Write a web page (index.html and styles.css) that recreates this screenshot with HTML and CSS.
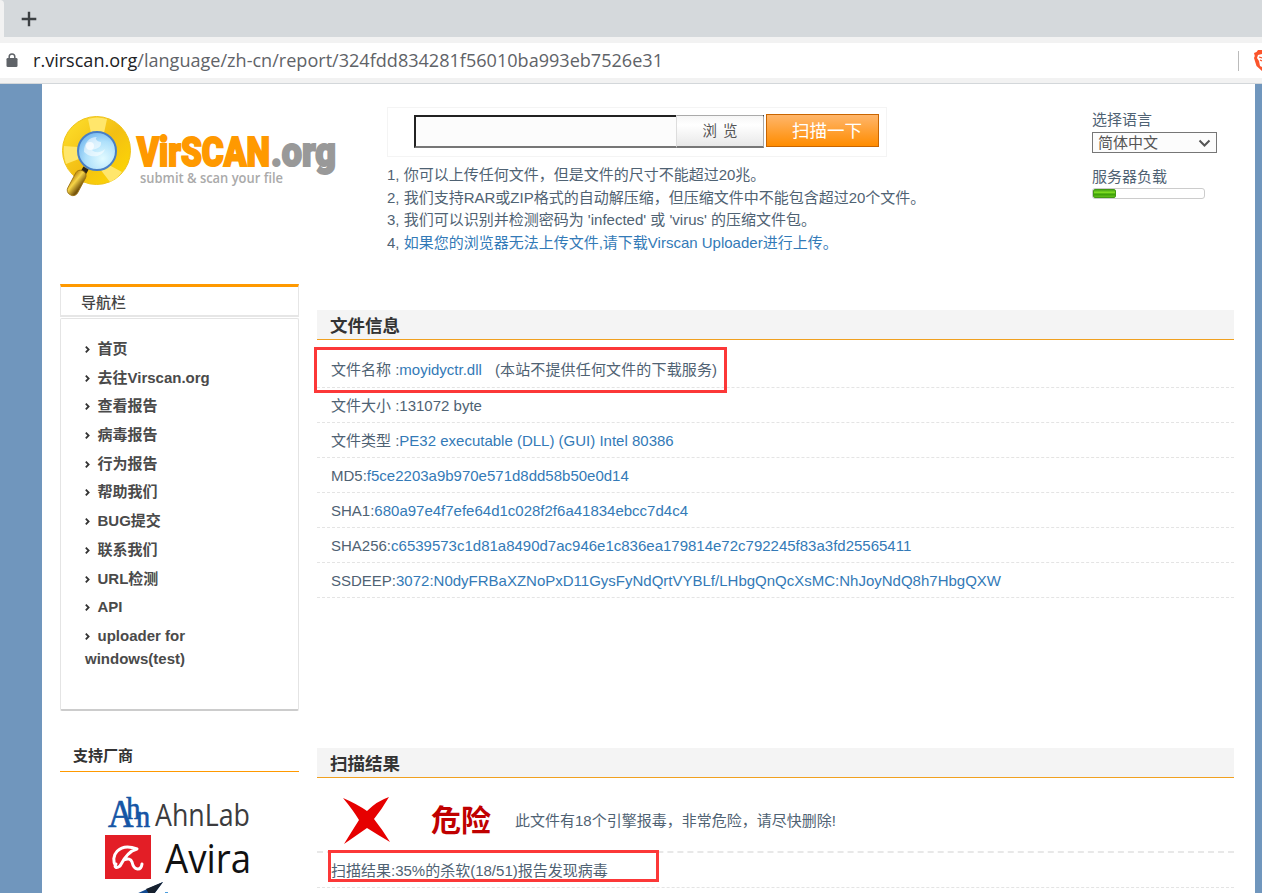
FILE: index.html
```html
<!DOCTYPE html>
<html lang="zh-CN">
<head>
<meta charset="utf-8">
<title>VirSCAN.org</title>
<link rel="stylesheet" href="styles.css">
</head>
<body>
<svg width="0" height="0" class="defs"><symbol id="chev" viewBox="0 0 5 7"><path d="M.8.7 3.600 3.500.8 6.300" fill="none" stroke="#333" stroke-width="1.800"/></symbol></svg>
<div class="tabstrip"><div class="tab-edge"></div><svg class="plus" width="16" height="16" viewBox="0 0 16 16"><path d="M8 .7v14.600M.7 8h14.600" stroke="#3c4043" stroke-width="2.400"/></svg></div>
<div class="toolbar">
  <div class="address">
    <svg class="lock" width="12" height="15" viewBox="0 0 12 15"><rect x=".5" y="5" width="11" height="9" rx="1.3" fill="#5f6368"/><path d="M3.2 6V3.8a2.8 2.8 0 0 1 5.6 0V6" fill="none" stroke="#5f6368" stroke-width="1.5"/></svg>
    <svg class="url" width="640" height="34"><text x="0" y="23" textLength="630" lengthAdjust="spacingAndGlyphs"><tspan fill="#202124">r.virscan.org</tspan><tspan fill="#5f6368">/language/zh-cn/report/324fdd834281f56010ba993eb7526e31</tspan></text></svg>
    <div class="divider"></div>
    <svg class="shield" width="9" height="24" viewBox="0 0 9 24"><path d="M9 1H5L3.500 3 1 4l.8 3L1 9l2.500 8L9 22z" fill="#fb542b"/><path d="M9 5 5 6 4 9l2 3 1 5 2 1z" fill="#fff"/><path d="M6 8l3 1M7 11l2 1" stroke="#fb542b" stroke-width="1.3"/></svg>
  </div>
</div>
<div class="page">
  <div class="sheet">
    <header class="header">
      <svg class="logo" width="290" height="94" viewBox="0 0 290 94">
        <defs>
          <linearGradient id="ring" x2="1" y2="1"><stop offset="0" stop-color="#ffe32e"/><stop offset=".5" stop-color="#f3bf14"/><stop offset="1" stop-color="#ffdb00"/></linearGradient>
          <radialGradient id="lens" cx=".65" cy=".7" r=".75"><stop offset="0" stop-color="#e2fbff"/><stop offset=".6" stop-color="#aee0fb"/><stop offset="1" stop-color="#75b8ee"/></radialGradient>
          <linearGradient id="grip" x2="1" y2=".5"><stop offset="0" stop-color="#b57d0c"/><stop offset=".45" stop-color="#f7d548"/><stop offset="1" stop-color="#76540c"/></linearGradient>
        </defs>
        <circle cx="40.500" cy="43.500" r="34" fill="url(#ring)" stroke="#efc319" stroke-width="1"/>
        <path d="M32 12q9-3 19 0l-3 14H35zM8 39l14 1 1 12-13 5q-3-9-2-18zM53 58l13 7q-5 7-12 10l-10-13z" fill="#ffe66b"/>
        <path d="m30 61-5 9" stroke="#2a2418" stroke-width="6"/>
        <circle cx="41" cy="44" r="19" fill="url(#lens)" stroke="#4a7fc4" stroke-width="2"/>
        <path d="M28 45c0-9 5-15 13-15-3 2 1 5 4 5 1 5-4 7-9 8 4 4 10 2 13-1-2 7-11 9-17 6z" fill="#fff" opacity=".55"/>
        <circle cx="34" cy="39" r="4" fill="#fff" opacity=".7"/>
        <rect x="-5.500" y="0" width="11" height="27" rx="5" transform="translate(27 64) rotate(28)" fill="url(#grip)" stroke="#9a7110" stroke-width=".8"/>
        <text class="brand brand-main" x="81" y="59" textLength="133" lengthAdjust="spacingAndGlyphs">VirSCAN</text>
        <text class="brand brand-org" x="215" y="59" textLength="65" lengthAdjust="spacingAndGlyphs">.org</text>
        <text class="brand-sub" x="84" y="76" textLength="143" lengthAdjust="spacingAndGlyphs">submit &amp; scan your file</text>
      </svg>
      <div class="upload">
        <div class="upload-box">
          <div class="file"><div class="browse">浏 览</div></div>
          <div class="scan">扫描一下</div>
        </div>
        <ol class="tips">
          <li>1, 你可以上传任何文件，但是文件的尺寸不能超过20兆。</li>
          <li>2, 我们支持RAR或ZIP格式的自动解压缩，但压缩文件中不能包含超过20个文件。</li>
          <li>3, 我们可以识别并检测密码为 'infected' 或 'virus' 的压缩文件包。</li>
          <li>4, <a>如果您的浏览器无法上传文件,请下载Virscan Uploader进行上传。</a></li>
        </ol>
      </div>
      <div class="tools">
        <div class="label">选择语言</div>
        <div class="select">简体中文<svg width="13" height="8" viewBox="0 0 13 8"><path d="m1.500 1.500 5 5 5-5" fill="none" stroke="#555" stroke-width="2"/></svg></div>
        <div class="label load">服务器负载</div>
        <div class="meter"><div class="meter-fill"></div></div>
      </div>
    </header>
    <div class="columns">
      <aside class="side">
        <div class="nav-title">导航栏</div>
        <ul class="nav">
          <li><svg><use href="#chev"/></svg>首页</li>
          <li><svg><use href="#chev"/></svg>去往Virscan.org</li>
          <li><svg><use href="#chev"/></svg>查看报告</li>
          <li><svg><use href="#chev"/></svg>病毒报告</li>
          <li><svg><use href="#chev"/></svg>行为报告</li>
          <li><svg><use href="#chev"/></svg>帮助我们</li>
          <li><svg><use href="#chev"/></svg>BUG提交</li>
          <li><svg><use href="#chev"/></svg>联系我们</li>
          <li><svg><use href="#chev"/></svg>URL检测</li>
          <li><svg><use href="#chev"/></svg>API</li>
          <li><svg><use href="#chev"/></svg>uploader for<br>windows(test)</li>
        </ul>
        <div class="vendors-title">支持厂商</div>
        <svg class="vendors" width="160" height="101" viewBox="0 0 160 101">
          <text class="ahn-mark" x="8" y="33.500" textLength="42" lengthAdjust="spacingAndGlyphs"><tspan font-size="39">A</tspan><tspan font-size="31" dx="-8" dy="-8">h</tspan><tspan font-size="31" dx="-5" dy="8">n</tspan></text>
          <text class="vendor-name" x="55" y="33" textLength="95" lengthAdjust="spacingAndGlyphs" font-size="31" fill="#3c3c3e">AhnLab</text>
          <rect x="5" y="42" width="46" height="44" fill="#e31e26"/>
          <path d="M16 74C9 63 19 49 37 56 29 58 24 65 20 73 16 76 14 74 16 71M24 67C28 65 31 66 32 69 34 78 41 78 42 71" fill="none" stroke="#fff" stroke-width="3" stroke-linecap="round" stroke-linejoin="round"/>
          <text class="vendor-name" x="65" y="79.500" textLength="86" lengthAdjust="spacingAndGlyphs" font-size="41" fill="#111">Avira</text>
          <path d="M36 101 63 89l-9 12z" fill="#124b92"/><path d="m46 96 17-7-9 12h-5z" fill="#16202e"/><path d="M65 101v-2h3v2z" fill="#4c9ddd"/>
        </svg>
      </aside>
      <main class="main">
        <h2>文件信息</h2>
        <div class="rows">
          <div class="row first">文件名称 :<a>moyidyctr.dll</a><span class="note">(本站不提供任何文件的下载服务)</span><div class="mark mark-name"></div></div>
          <div class="row">文件大小 :131072 byte</div>
          <div class="row">文件类型 :<a>PE32 executable (DLL) (GUI) Intel 80386</a></div>
          <div class="row">MD5:<a>f5ce2203a9b970e571d8dd58b50e0d14</a></div>
          <div class="row">SHA1:<a>680a97e4f7efe64d1c028f2f6a41834ebcc7d4c4</a></div>
          <div class="row">SHA256:<a>c6539573c1d81a8490d7ac946e1c836ea179814e72c792245f83a3fd25565411</a></div>
          <div class="row">SSDEEP:<a>3072:N0dyFRBaXZNoPxD11GysFyNdQrtVYBLf/LHbgQnQcXsMC:NhJoyNdQ8h7HbgQXW</a></div>
        </div>
        <h2>扫描结果</h2>
        <div class="verdict">
          <svg width="48" height="46" viewBox="0 0 48 46"><path d="M0 1Q14 7 24 14 34 4 46 0 39 12 31 22 39 32 47 45 35 38 24 31 14 38 1 47 9 34 16 23 10 13 0 1z" fill="#e60000"/></svg>
          <strong>危险</strong>
          <span>此文件有18个引擎报毒，非常危险，请尽快删除!</span>
        </div>
        <div class="row">扫描结果:35%的杀软(18/51)报告发现病毒<div class="mark mark-summary"></div></div>
      </main>
    </div>
  </div>
</div>
</body>
</html>
```
FILE: styles.css
```css
* { box-sizing: border-box; }
body { margin: 0; width: 1262px; height: 893px; overflow: hidden; background: #fff; color: #4f6273; font: 15px/23px "Liberation Sans", Arial, "Noto Sans CJK SC", sans-serif; }
a { color: #337ab7; }
svg { display: block; flex: none; overflow: visible; }
.defs { position: absolute; }
.tabstrip { height: 37px; display: flex; background: #d5d9dc; }
.tab-edge { width: 4px; background: #f2f2f2; border-top-right-radius: 4px; }
.plus { margin: 11px 0 0 17px; }
.toolbar { height: 47px; padding: 6px 0 5px; background: #f2f2f2; border-bottom: 1px solid #d3d7da; }
.address { height: 35px; display: flex; align-items: center; background: #fff; }
.lock { margin-left: 6px; }
.url { margin-left: 15px; font: 18.500px "Open Sans", "Noto Sans", sans-serif; }
.divider { width: 1px; height: 20px; margin-left: 565px; background: #bbb; }
.shield { margin-left: 14px; }
.page { height: 809px; padding: 0 7px 0 42px; background: #7096bd; }
.sheet { height: 809px; background: #fff; overflow: hidden; }
.header { height: 200px; display: flex; padding-top: 23px; }
.logo { margin: 0 0 0 14px; }
.brand { font: 900 41px Roboto, "Open Sans", sans-serif; stroke-width: 2px; }
.brand-main { fill: #f90; stroke: #f90; }
.brand-org { fill: #999; stroke: #999; }
.brand-sub { font: 600 15px "Open Sans", sans-serif; fill: #aaa; }
.upload { width: 560px; margin-left: 41px; }
.upload-box { width: 500px; height: 50px; display: flex; padding: 6px 0 0 26px; border: 1px solid #f4f4f4; }
.file { width: 350px; height: 33px; margin-top: 1px; display: flex; justify-content: flex-end; background: #fcfcfc; border: 2px solid #222; border-right: 1px solid #aaa; border-bottom-color: #767676; }
.browse { width: 87px; height: 33px; margin-top: -2px; border-top: 1px solid #aaa; border-bottom: 2px solid #777; border-left: 1px solid #ddd; background: linear-gradient(#f6f6f6, #fff 30%, #e8e8e8); text-align: center; line-height: 31px; font-size: 14.500px; word-spacing: 2px; color: #555; }
.scan { width: 113px; height: 33px; margin-left: 2px; padding-left: 9px; border: 1px solid #c96500; background: linear-gradient(#ffb66b, #ff8c00); color: #fff; text-align: center; font-size: 17.500px; line-height: 32px; }
.tips { list-style: none; margin: 7px 0 0; padding: 0; line-height: 22.7px; white-space: nowrap; }
.tools { width: 125px; margin-left: 145px; }
.label { height: 24px; line-height: 23px; margin-top: 1px; }
.select { height: 21px; display: flex; align-items: center; justify-content: space-between; padding: 0 5px; border: 1px solid #767676; background: #fcfcfc; color: #555; line-height: 19px; }
.load { margin-top: 12px; height: 23px; }
.meter { width: 113px; height: 11px; border: 1px solid #ccc; border-radius: 3px; background: #fff; }
.meter-fill { width: 23px; height: 9px; border-radius: 2px; background: linear-gradient(#4aa51a, #7fdd22 35%, #3b9e08 60%, #62bf19); border: 1px solid #429914; }
.columns { display: flex; gap: 18px; padding-left: 18px; }
.side { width: 239px; height: 609px; }
.nav-title { height: 33px; padding-left: 20px; border: 2px solid #e6e6e6; border-width: 3px 1px 2px; border-top-color: #f90; line-height: 32px; font-weight: 500; color: #444; }
.nav { list-style: none; margin: 1px 0 0; padding: 18px 24px 0; height: 393px; border: 1px solid #e4e4e4; border-bottom: 2px solid #ccc; border-radius: 2px; color: #4a4a4a; font-weight: 700; line-height: 23px; }
.nav li { margin-bottom: 5.700px; }
.nav svg { display: inline-block; width: 5px; height: 7px; margin: 0 7.500px 0 0; vertical-align: 1px; }
.vendors-title { height: 33px; margin-top: 28px; padding-left: 13px; border-bottom: 1px solid #f90; color: #333; font-weight: 700; line-height: 33px; }
.vendors { margin: 21px 0 0 40px; overflow: hidden; }
.ahn-mark { font-family: "Liberation Serif", serif; fill: #1555a5; stroke: #1555a5; stroke-width: .7px; }
.vendor-name { font-family: "Open Sans", "Noto Sans", sans-serif; }
.main { width: 917px; padding-top: 26px; }
h2 { margin: 0; height: 30px; padding-left: 13px; background: #f4f4f4; border-bottom: 1px solid #f0a020; color: #333; font-size: 17.500px; line-height: 32px; }
.rows { height: 408px; }
.row { position: relative; height: 35px; padding-left: 14px; border-bottom: 1px dashed #e4e4e4; line-height: 35px; white-space: nowrap; }
.first { height: 48px; padding-top: 12px; }
.note { margin-left: 13px; letter-spacing: .15px; }
.mark { position: absolute; border: 3px solid #fc3838; }
.mark-name { left: -3px; top: 7px; width: 413px; height: 46px; }
.mark-summary { left: 11px; top: -3px; width: 331px; height: 32px; }
.verdict { height: 75px; display: flex; align-items: center; padding: 11px 0 0 26px; border-bottom: 2px dashed #e8e8e8; }
.verdict strong { margin-left: 40px; color: #c00000; font-size: 30px; }
.verdict span { margin-left: 24px; }
```
